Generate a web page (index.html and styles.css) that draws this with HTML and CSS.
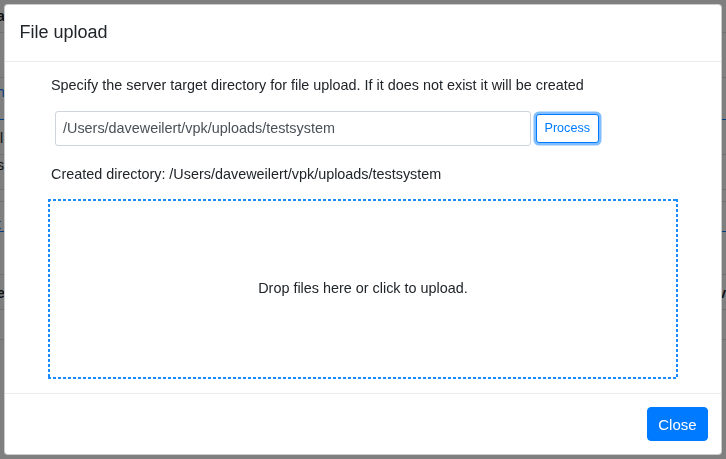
FILE: index.html
```html
<!DOCTYPE html>
<html>
<head>
<meta charset="utf-8">
<link rel="stylesheet" href="styles.css">
</head>
<body>
<div class="page">
  <div class="bg-row r1"><span class="l">a</span><span class="r"></span></div>
  <div class="bg-row r2"><span class="l"></span><span class="r"></span></div>
  <div class="bg-row r3 link"><span class="l">h</span><span class="r"></span></div>
  <div class="bg-row r4"><span class="l">ll</span><span class="r"></span></div>
  <div class="bg-row r5"><span class="l">s</span><span class="r"></span></div>
  <div class="bg-row r6"><span class="l"></span><span class="r"></span></div>
  <div class="bg-row r7 link"><span class="l">t</span><span class="r"></span></div>
  <div class="bg-row r8"><span class="l"></span><span class="r"></span></div>
  <div class="bg-row r9"><span class="l">e</span><span class="r">v</span></div>
  <div class="bg-row r10"><span class="l"></span><span class="r"></span></div>
</div>
<div class="backdrop"></div>
<div class="modal">
  <div class="modal-header">
    <h5 class="modal-title">File upload</h5>
  </div>
  <div class="modal-body">
    <p class="intro">Specify the server target directory for file upload. If it does not exist it will be created</p>
    <div class="dir-row">
      <input class="form-control" type="text" value="/Users/daveweilert/vpk/uploads/testsystem">
      <button class="btn-outline">Process</button>
    </div>
    <p class="created">Created directory: /Users/daveweilert/vpk/uploads/testsystem</p>
    <div class="dropzone">
      <span>Drop files here or click to upload.</span>
    </div>
  </div>
  <div class="modal-footer">
    <button class="btn-primary">Close</button>
  </div>
</div>
</body>
</html>
```
FILE: styles.css
```css
* { box-sizing: border-box; }
html, body {
  margin: 0;
  padding: 0;
  width: 726px;
  height: 459px;
  overflow: hidden;
  font-family: "Liberation Sans", Arial, sans-serif;
  font-size: 14.4px;
  color: #212529;
  background: #fff;
}
.page {
  display: flex;
  flex-direction: column;
}
.bg-row {
  display: flex;
  justify-content: space-between;
  border-bottom: 1px solid #dee2e6;
  font-size: 14px;
  line-height: 16px;
  font-weight: bold;
}
.bg-row .l { margin-left: -3px; }
.bg-row.link { color: #007bff; font-weight: normal; border-bottom-color: #007bff; }
.r1 { height: 33px; padding-top: 8px; }
.r2 { height: 45px; }
.r3 { height: 42px; padding-top: 6px; }
.r4 { height: 35px; padding-top: 10px; font-weight: normal; }
.r5 { height: 35px; padding-top: 2px; font-weight: normal; }
.r6 { height: 12px; }
.r7 { height: 30px; padding-top: 14px; }
.r8 { height: 43px; }
.r9 { height: 35px; padding-top: 10px; }
.r10 { height: 30px; }
.backdrop {
  position: fixed;
  inset: 0;
  background: rgba(0, 0, 0, 0.5);
}
.modal {
  position: fixed;
  left: 4px;
  top: 4px;
  width: 718px;
  height: 451px;
  background: #fff;
  border: 1px solid rgba(0, 0, 0, 0.2);
  border-radius: 4px;
  display: flex;
  flex-direction: column;
}
.modal-header {
  padding: 14.4px 14.4px;
  border-bottom: 1px solid #e9ecef;
}
.modal-title {
  margin: 0;
  font-size: 18px;
  font-weight: 400;
  line-height: 27px;
}
.modal-body {
  flex: 1;
  padding: 13px 14.4px 14px 43px;
}
.intro {
  margin: 0 0 14.6px 3px;
  line-height: 21.6px;
}
.dir-row {
  display: flex;
  align-items: center;
  gap: 5px;
  margin-left: 7px;
}
.form-control {
  width: 476px;
  height: 35px;
  padding: 0 7px;
  border: 1px solid #ced4da;
  border-radius: 3px;
  font-family: "Liberation Sans", Arial, sans-serif;
  font-size: 14.4px;
  color: #495057;
  background: #fff;
  outline: none;
}
.btn-outline {
  height: 29px;
  padding: 0 7.5px;
  border: 1px solid #007bff;
  border-radius: 3px;
  background: #fff;
  color: #007bff;
  font-family: "Liberation Sans", Arial, sans-serif;
  font-size: 12.6px;
  box-shadow: 0 0 0 2.5px rgba(0, 123, 255, 0.5);
}
.created {
  margin: 18px 0 13px 3px;
  line-height: 21.6px;
}
.dropzone {
  width: 630px;
  height: 180px;
  background:
    repeating-linear-gradient(90deg, #1a8cff 0 3px, transparent 3px 5px) top left / 100% 2px no-repeat,
    repeating-linear-gradient(90deg, #1a8cff 0 3px, transparent 3px 5px) bottom left / 100% 2px no-repeat,
    repeating-linear-gradient(180deg, #1a8cff 0 3px, transparent 3px 5px) top left / 2px 100% no-repeat,
    repeating-linear-gradient(180deg, #1a8cff 0 3px, transparent 3px 5px) top right / 2px 100% no-repeat;
  display: flex;
  align-items: center;
  justify-content: center;
  line-height: 21.6px;
}
.modal-footer {
  display: flex;
  justify-content: flex-end;
  padding: 13px 13.4px;
  border-top: 1px solid #e9ecef;
}
.btn-primary {
  height: 34px;
  padding: 0 10px;
  border: 1px solid #007bff;
  border-radius: 4px;
  background: #007bff;
  color: #fff;
  font-family: "Liberation Sans", Arial, sans-serif;
  font-size: 15px;
}
```
